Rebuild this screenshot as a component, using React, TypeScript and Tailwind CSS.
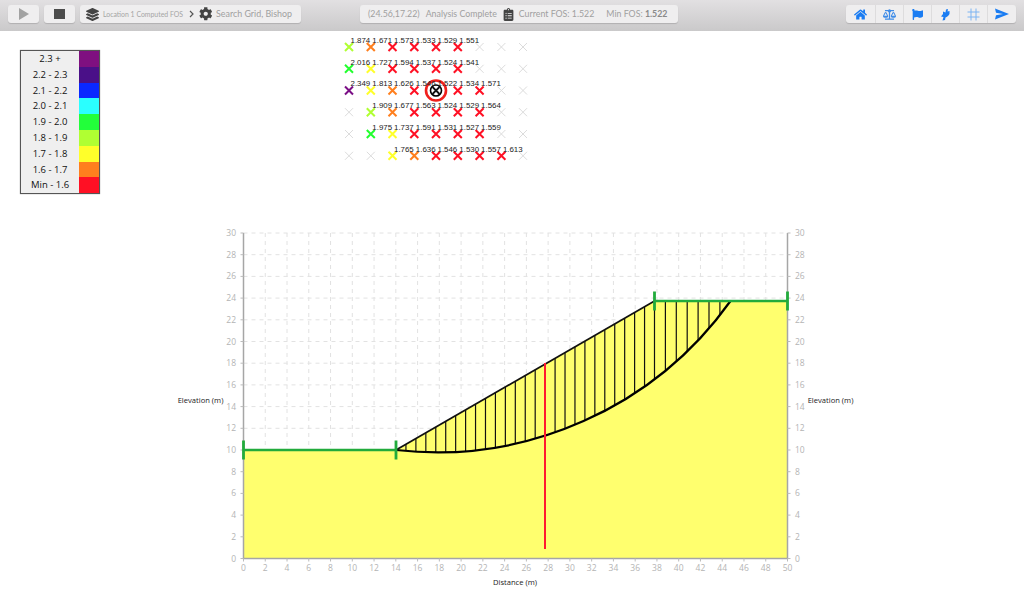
import React from "react";
import { FaHome, FaBalanceScale, FaFlag, FaCog, FaClipboardList, FaLayerGroup } from "react-icons/fa";

const RED = "#ff1024", OR = "#ff7f1e", YE = "#ffff2a", LI = "#b0ff32", GR = "#22ff2e", PU = "#7b0f86", GY = "#dcdcdc";
const gx = [349, 370.8, 392.5, 414.3, 436, 457.8, 479.6, 501.4, 523];
const gy = [47, 68.8, 90.5, 112.2, 134, 155.8];
const marks: string[][] = [
  [LI, OR, RED, RED, RED, RED, GY, GY, GY],
  [GR, YE, RED, RED, RED, RED, GY, GY, GY],
  [PU, YE, OR, RED, "#000", RED, RED, GY, GY],
  [GY, LI, OR, RED, RED, RED, RED, GY, GY],
  [GY, GR, YE, RED, RED, RED, RED, GY, GY],
  [GY, GY, YE, OR, RED, RED, RED, RED, GY],
];
const vals: string[][] = [
  ["1.874", "1.671", "1.573", "1.533", "1.529", "1.551", "", "", ""],
  ["2.016", "1.727", "1.594", "1.537", "1.524", "1.541", "", "", ""],
  ["2.349", "1.813", "1.626", "1.546", "1.522", "1.534", "1.571", "", ""],
  ["", "1.909", "1.677", "1.563", "1.524", "1.529", "1.564", "", ""],
  ["", "1.975", "1.737", "1.591", "1.531", "1.527", "1.559", "", ""],
  ["", "", "1.765", "1.636", "1.546", "1.530", "1.557", "1.613", ""],
];
const legend: [string, string][] = [
  ["2.3 +", "#7f1080"], ["2.2 - 2.3", "#4a1088"], ["2.1 - 2.2", "#0a28ff"], ["2.0 - 2.1", "#2affff"],
  ["1.9 - 2.0", "#22ff3a"], ["1.8 - 1.9", "#b0ff32"], ["1.7 - 1.8", "#ffff2a"], ["1.6 - 1.7", "#ff7f1e"], ["Min - 1.6", "#ff1024"],
];

const X0 = 243.5, Y0 = 558.5, SX = 10.88, SY = 10.85;
const px = (v: number) => X0 + v * SX;
const py = (v: number) => Y0 - v * SY;
const xt = Array.from({ length: 26 }, (_, i) => i * 2);
const yt = Array.from({ length: 16 }, (_, i) => i * 2);
const CX = 436.8, CY = 91.6, R = 360.7;
const arcY = (x: number) => CY + Math.sqrt(R * R - (x - CX) ** 2);
const surfY = (x: number) => (x < 654.5 ? 450 - ((x - 396) * 149) / 258.5 : 301);
const slices = [
  ...Array.from({ length: 26 }, (_, i) => 396 + (i * 258.5) / 26).slice(1),
  ...Array.from({ length: 7 }, (_, i) => 654.5 + i * 10.9),
];

const Btn = ({ children, cls }: { children: React.ReactNode; cls: string }) => (
  <div className={`flex h-[18px] shrink-0 items-center rounded-[3px] bg-[#efeeef] shadow-[0_1px_1px_rgba(0,0,0,0.15)] ${cls}`}>{children}</div>
);

function Xm({ x, y, c, s = 4, w = 2 }: { x: number; y: number; c: string; s?: number; w?: number }) {
  return <path d={`M${x - s} ${y - s}L${x + s} ${y + s}M${x + s} ${y - s}L${x - s} ${y + s}`} stroke={c} strokeWidth={w} fill="none" />;
}

export default function App() {
  return (
    <div className="flex h-[594px] w-[1024px] flex-col overflow-hidden bg-white font-['Lato',sans-serif]">
      <header className="flex h-[31px] items-center bg-gradient-to-b from-[#e2e0e2] to-[#cac9ca] pb-[3px] pl-[8px] pr-[8px] text-[#aaa9aa]">
        <Btn cls="w-[31px] justify-center">
          <svg width="10" height="12" viewBox="0 0 10 12"><path d="M0 0L10 6 0 12z" fill="#a2a2a2" /></svg>
        </Btn>
        <Btn cls="ml-[5px] w-[31px] justify-center">
          <svg width="11" height="10" viewBox="0 0 11 10"><rect width="11" height="10" fill="#4c4c4c" /></svg>
        </Btn>
        <Btn cls="ml-[5px] w-[221px] pl-[6px]">
          <FaLayerGroup className="h-[13px] w-[13px] shrink-0 text-[#444]" />
          <span className="ml-[4px] whitespace-nowrap text-[6.900px] text-[#a5a5a5]">Location 1 Computed FOS</span>
          <svg className="ml-[6px] shrink-0" width="5" height="8" viewBox="0 0 5 8"><path d="M1 1l3 3-3 3" stroke="#555" strokeWidth="1.2" fill="none" /></svg>
          <FaCog className="ml-[5px] h-[13.500px] w-[13.500px] shrink-0 text-[#444]" />
          <span className="ml-[3.500px] whitespace-nowrap text-[8.900px] text-[#a0a0a0]">Search Grid, Bishop</span>
        </Btn>
        <Btn cls="ml-[59px] w-[318px] pl-[8px] text-[8.800px] text-[#a0a0a0]">
          <span className="whitespace-nowrap">(24.56,17.22)</span>
          <span className="ml-[6px] whitespace-nowrap">Analysis Complete</span>
          <FaClipboardList className="ml-[6px] h-[13px] w-[11px] shrink-0 text-[#444]" />
          <span className="ml-[5px] whitespace-nowrap">Current FOS: 1.522</span>
          <span className="ml-[12px] whitespace-nowrap">Min FOS: <b className="text-[#8a8a8a]">1.522</b></span>
        </Btn>
        <Btn cls="ml-auto w-[170px] text-[#1a7cf2]">
          <div className="flex h-full w-[29.500px] items-center justify-center border-r border-[#dddcdd]"><FaHome className="h-[13px] w-[13px]" /></div>
          <div className="flex h-full w-[28px] items-center justify-center border-r border-[#dddcdd]"><FaBalanceScale className="h-[13px] w-[13px] text-[#3f8ce8]" /></div>
          <div className="flex h-full w-[28px] items-center justify-center border-r border-[#dddcdd]"><FaFlag className="h-[11px] w-[11px]" /></div>
          <div className="flex h-full w-[28px] items-center justify-center border-r border-[#dddcdd]">
            <svg width="10" height="13" viewBox="0 0 10 13"><path d="M2.500 12.500L3.500 9 1 8.500 3 6V3.500L5.500 4.500 6 1.500 8 1 7.500 3.500 9.500 3V6C8.500 8 7 9 5.500 9.500L5 12z" fill="currentColor" /></svg>
          </div>
          <div className="flex h-full w-[28px] items-center justify-center border-r border-[#dddcdd]">
            <svg width="13" height="13" viewBox="0 0 13 13"><path d="M4 .5v12M9 .5v12M.5 4h12M.5 9h12" stroke="#7db4f2" strokeWidth="1" fill="none" /></svg>
          </div>
          <div className="flex h-full flex-1 items-center justify-center">
            <svg width="14" height="12" viewBox="0 0 14 12"><path d="M0 .5L14 6 0 11.500 1 7.200 8 6 1 4.800z" fill="currentColor" /></svg>
          </div>
        </Btn>
      </header>

      <div className="flex h-[194px] items-start pl-[20px]">
        <div className="mt-[19px] w-[80px] border border-[#555] bg-[#efefef] font-['Open_Sans',sans-serif] shadow-[0_0_1px_#888]">
          {legend.map(([t, c]) => (
            <div key={t} className="flex h-[15.800px] items-stretch">
              <div className="flex-1 text-center text-[9.500px] leading-[16.500px] text-[#111]">{t}</div>
              <div className="w-[20px]" style={{ background: c }} />
            </div>
          ))}
        </div>
        <svg className="ml-[240px] mt-[3px]" width="194" height="132" viewBox="340 34 194 132">
          {marks.map((row, j) =>
            row.map((c, i) =>
              c === "#000" ? null : <Xm key={`${i}-${j}`} x={gx[i]} y={gy[j]} c={c} w={c === GY ? 1 : 2} />
            )
          )}
          <circle cx={436} cy={90.5} r={10} fill="#fff" stroke="#f0201c" strokeWidth={2.6} />
          <circle cx={436} cy={90.5} r={5.5} fill="none" stroke="#000" strokeWidth={1.6} />
          <Xm x={436} y={90.5} c="#111" s={3.5} w={1.8} />
          {vals.map((row, j) =>
            row.map((v, i) =>
              v ? (
                <text key={`${i}-${j}`} x={gx[i] + 1.5} y={gy[j] - 4.3} fontSize={7.9} fill="#222" fontFamily="Liberation Sans, sans-serif">{v}</text>
              ) : null
            )
          )}
        </svg>
      </div>

      <svg className="ml-[170px]" width="690" height="369" viewBox="170 225 690 369">
        {xt.map((v) => (
          <path key={v} d={`M${px(v)} 233V${Y0}`} stroke="#e2e2e2" strokeDasharray="4 4" fill="none" />
        ))}
        {yt.map((v) => (
          <path key={v} d={`M${X0} ${py(v)}H787.500`} stroke="#e2e2e2" strokeDasharray="4 4" fill="none" />
        ))}
        <polygon points={`${X0},450 396,450 654.5,301 787.5,301 787.5,${Y0} ${X0},${Y0}`} fill="#ffff6e" />
        <path d={`M${X0} 233V${Y0}H787.500V233`} stroke="#a6a6a6" strokeWidth={1.5} fill="none" />
        {xt.map((v) => (
          <g key={v}>
            <path d={`M${px(v)} ${Y0}v3`} stroke="#bbb" fill="none" />
            <text x={px(v)} y={571} textAnchor="middle" fontSize={8.5} fill="#b4b4b4" fontFamily="Open Sans, sans-serif">{v}</text>
          </g>
        ))}
        {yt.map((v) => (
          <g key={v}>
            <path d={`M${X0 - 3} ${py(v)}h3M787.500 ${py(v)}h3`} stroke="#bbb" fill="none" />
            <text x={236} y={py(v) + 3} textAnchor="end" fontSize={8.5} fill="#b4b4b4" fontFamily="Open Sans, sans-serif">{v}</text>
            <text x={795} y={py(v) + 3} fontSize={8.5} fill="#b4b4b4" fontFamily="Open Sans, sans-serif">{v}</text>
          </g>
        ))}
        <text x={200.5} y={403} textAnchor="middle" fontSize={7.6} fill="#222" fontFamily="Open Sans, sans-serif">Elevation (m)</text>
        <text x={830.5} y={403} textAnchor="middle" fontSize={7.6} fill="#222" fontFamily="Open Sans, sans-serif">Elevation (m)</text>
        <text x={515} y={585} textAnchor="middle" fontSize={7.6} fill="#222" fontFamily="Open Sans, sans-serif">Distance (m)</text>
        {slices.map((x) => (
          <path key={x} d={`M${x} ${surfY(x)}V${arcY(x)}`} stroke="#111" strokeWidth={1.2} fill="none" />
        ))}
        <path d="M396 450L654.500 301" stroke="#111" strokeWidth={1.7} fill="none" />
        <path d={`M396 450A${R} ${R} 0 0 0 730.500 301`} stroke="#000" strokeWidth={2.2} fill="none" />
        <path d={`M${X0} 450H396M654.500 301H787.500`} stroke="#22ab3c" strokeWidth={2.5} fill="none" />
        <path d={`M${X0} 440.500V459.500M396 440.500V459.500M654.500 291.500V310.500M787.500 291.500V310.500`} stroke="#22ab3c" strokeWidth={2.8} fill="none" />
        <path d="M545 363V549" stroke="#ff1a30" strokeWidth={2} fill="none" />
      </svg>
    </div>
  );
}
